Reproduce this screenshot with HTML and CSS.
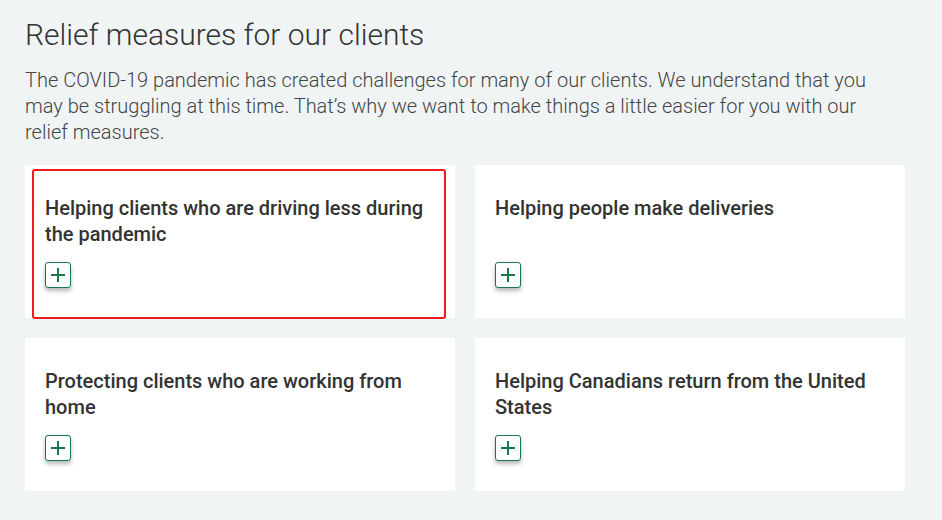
FILE: index.html
```html
<!DOCTYPE html>
<html lang="en">
<head>
<meta charset="utf-8">
<title>Relief measures for our clients</title>
<link rel="stylesheet" href="styles.css">
</head>
<body>
<main class="page">
  <h1 class="title">Relief measures for our clients</h1>
  <p class="intro">The COVID-19 pandemic has created challenges for many of our clients. We understand that you may be struggling at this time. That’s why we want to make things a little easier for you with our relief measures.</p>
  <div class="cards">
    <div class="card card-focused">
      <h2 class="card-title">Helping clients who are driving less during the pandemic</h2>
      <button class="expand" aria-label="Expand"><svg viewBox="0 0 16 16" width="16" height="16"><path d="M8 1v14M1 8h14" stroke="#17784a" stroke-width="2" fill="none"/></svg></button>
      <span class="focus-ring"></span>
    </div>
    <div class="card">
      <h2 class="card-title">Helping people make deliveries</h2>
      <button class="expand" aria-label="Expand"><svg viewBox="0 0 16 16" width="16" height="16"><path d="M8 1v14M1 8h14" stroke="#17784a" stroke-width="2" fill="none"/></svg></button>
    </div>
    <div class="card">
      <h2 class="card-title">Protecting clients who are working from home</h2>
      <button class="expand" aria-label="Expand"><svg viewBox="0 0 16 16" width="16" height="16"><path d="M8 1v14M1 8h14" stroke="#17784a" stroke-width="2" fill="none"/></svg></button>
    </div>
    <div class="card">
      <h2 class="card-title">Helping Canadians return from the United States</h2>
      <button class="expand" aria-label="Expand"><svg viewBox="0 0 16 16" width="16" height="16"><path d="M8 1v14M1 8h14" stroke="#17784a" stroke-width="2" fill="none"/></svg></button>
    </div>
  </div>
</main>
</body>
</html>
```

FILE: styles.css
```css
html, body {
  margin: 0;
  padding: 0;
  background: #f1f4f5;
}
body {
  font-family: Roboto, "Liberation Sans", sans-serif;
  color: #333;
}
.page {
  padding: 17px 25px 0 25px;
}
.title {
  margin: 0;
  font-size: 30px;
  line-height: 36px;
  font-weight: 300;
  color: #333;
}
.intro {
  margin: 14px 0 0 0;
  max-width: 862px;
  font-size: 20px;
  line-height: 26px;
  font-weight: 300;
  color: #444;
}
.cards {
  margin-top: 20px;
  display: grid;
  grid-template-columns: 430px 430px;
  gap: 20px;
}
.card {
  position: relative;
  background: #fff;
  height: 153px;
  box-sizing: border-box;
  padding: 30px 20px 0 20px;
}
.card-title {
  margin: 0;
  font-size: 20px;
  line-height: 26px;
  font-weight: 500;
  color: #333;
  min-height: 52px;
}
.expand {
  margin-top: 15px;
  width: 26px;
  height: 26px;
  padding: 0;
  border: 1px solid #17784a;
  border-radius: 3px;
  background: #fff;
  display: flex;
  align-items: center;
  justify-content: center;
  box-shadow: 0 3px 4px rgba(0, 0, 0, 0.28);
  cursor: pointer;
}
.expand svg {
  display: block;
}
.focus-ring {
  position: absolute;
  left: 7px;
  top: 4px;
  right: 9px;
  bottom: -1px;
  border: 2px solid #ee1c1c;
  border-radius: 3px;
  pointer-events: none;
}
```
